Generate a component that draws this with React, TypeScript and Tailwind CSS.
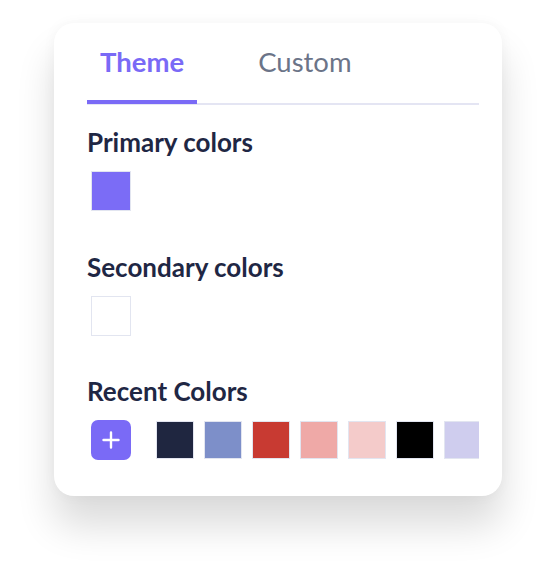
import React, { useState } from "react";

const recentColors = [
  "#1f2640",
  "#7d8fc9",
  "#c83a32",
  "#efa9a7",
  "#f4cbca",
  "#000000",
  "#cfcdee",
];

const Swatch: React.FC<{ color: string; size?: "lg" | "md" }> = ({ color, size = "lg" }) => (
  <div
    className={`shrink-0 border border-[#e2e5f0] ${size === "lg" ? "h-10 w-10" : "h-[38px] w-[38px]"}`}
    style={{ backgroundColor: color }}
  />
);

const App: React.FC = () => {
  const [tab, setTab] = useState<"theme" | "custom">("theme");

  return (
    <div
      className="flex min-h-[580px] w-full justify-center bg-white pt-[23px]"
      style={{ fontFamily: "Lato, 'Open Sans', sans-serif" }}
    >
      <div className="flex h-[473px] w-[448px] flex-col rounded-[20px] bg-white pl-[33px] pr-[23px] pt-[22px] shadow-[0_30px_38px_rgba(0,0,0,0.14),0_0_14px_rgba(0,0,0,0.04)]">
        {/* tabs */}
        <div className="flex gap-12 border-b-2 border-[#e4e5f3]">
          <button
            onClick={() => setTab("theme")}
            className={`-mb-px px-[13px] pb-[21px] text-[27.5px] leading-[34px] ${
              tab === "theme"
                ? "border-b-4 border-[#7a6af6] font-bold text-[#7a6af6]"
                : "border-b-4 border-transparent text-[#6b7488]"
            }`}
          >
            Theme
          </button>
          <button
            onClick={() => setTab("custom")}
            className={`-mb-px px-[13px] pb-[21px] text-[27.5px] leading-[34px] ${
              tab === "custom"
                ? "border-b-4 border-[#7a6af6] font-bold text-[#7a6af6]"
                : "border-b-4 border-transparent text-[#6b7488]"
            }`}
          >
            Custom
          </button>
        </div>

        <h3 className="mt-[22px] text-[26px] font-bold leading-[31px] text-[#1f2744]">Primary colors</h3>
        <div className="ml-1 mt-[13px]">
          <Swatch color="#7b6cf6" />
        </div>

        <h3 className="mt-[41px] text-[26px] font-bold leading-[31px] text-[#1f2744]">Secondary colors</h3>
        <div className="ml-1 mt-[13px]">
          <Swatch color="#ffffff" />
        </div>

        <h3 className="mt-[40px] text-[26px] font-bold leading-[31px] text-[#1f2744]">Recent Colors</h3>
        <div className="mt-[13px] flex items-center overflow-hidden">
          <button className="ml-1 flex h-10 w-10 shrink-0 items-center justify-center rounded-[7px] bg-[#7a6af6]">
            <svg width="18" height="18" viewBox="0 0 18 18" fill="none">
              <path d="M9 1.5v15M1.5 9h15" stroke="white" strokeWidth="2.4" strokeLinecap="round" />
            </svg>
          </button>
          <div className="ml-[25px] flex gap-[10px]">
            {recentColors.map((c) => (
              <Swatch key={c} color={c} size="md" />
            ))}
          </div>
        </div>
      </div>
    </div>
  );
};

export default App;
